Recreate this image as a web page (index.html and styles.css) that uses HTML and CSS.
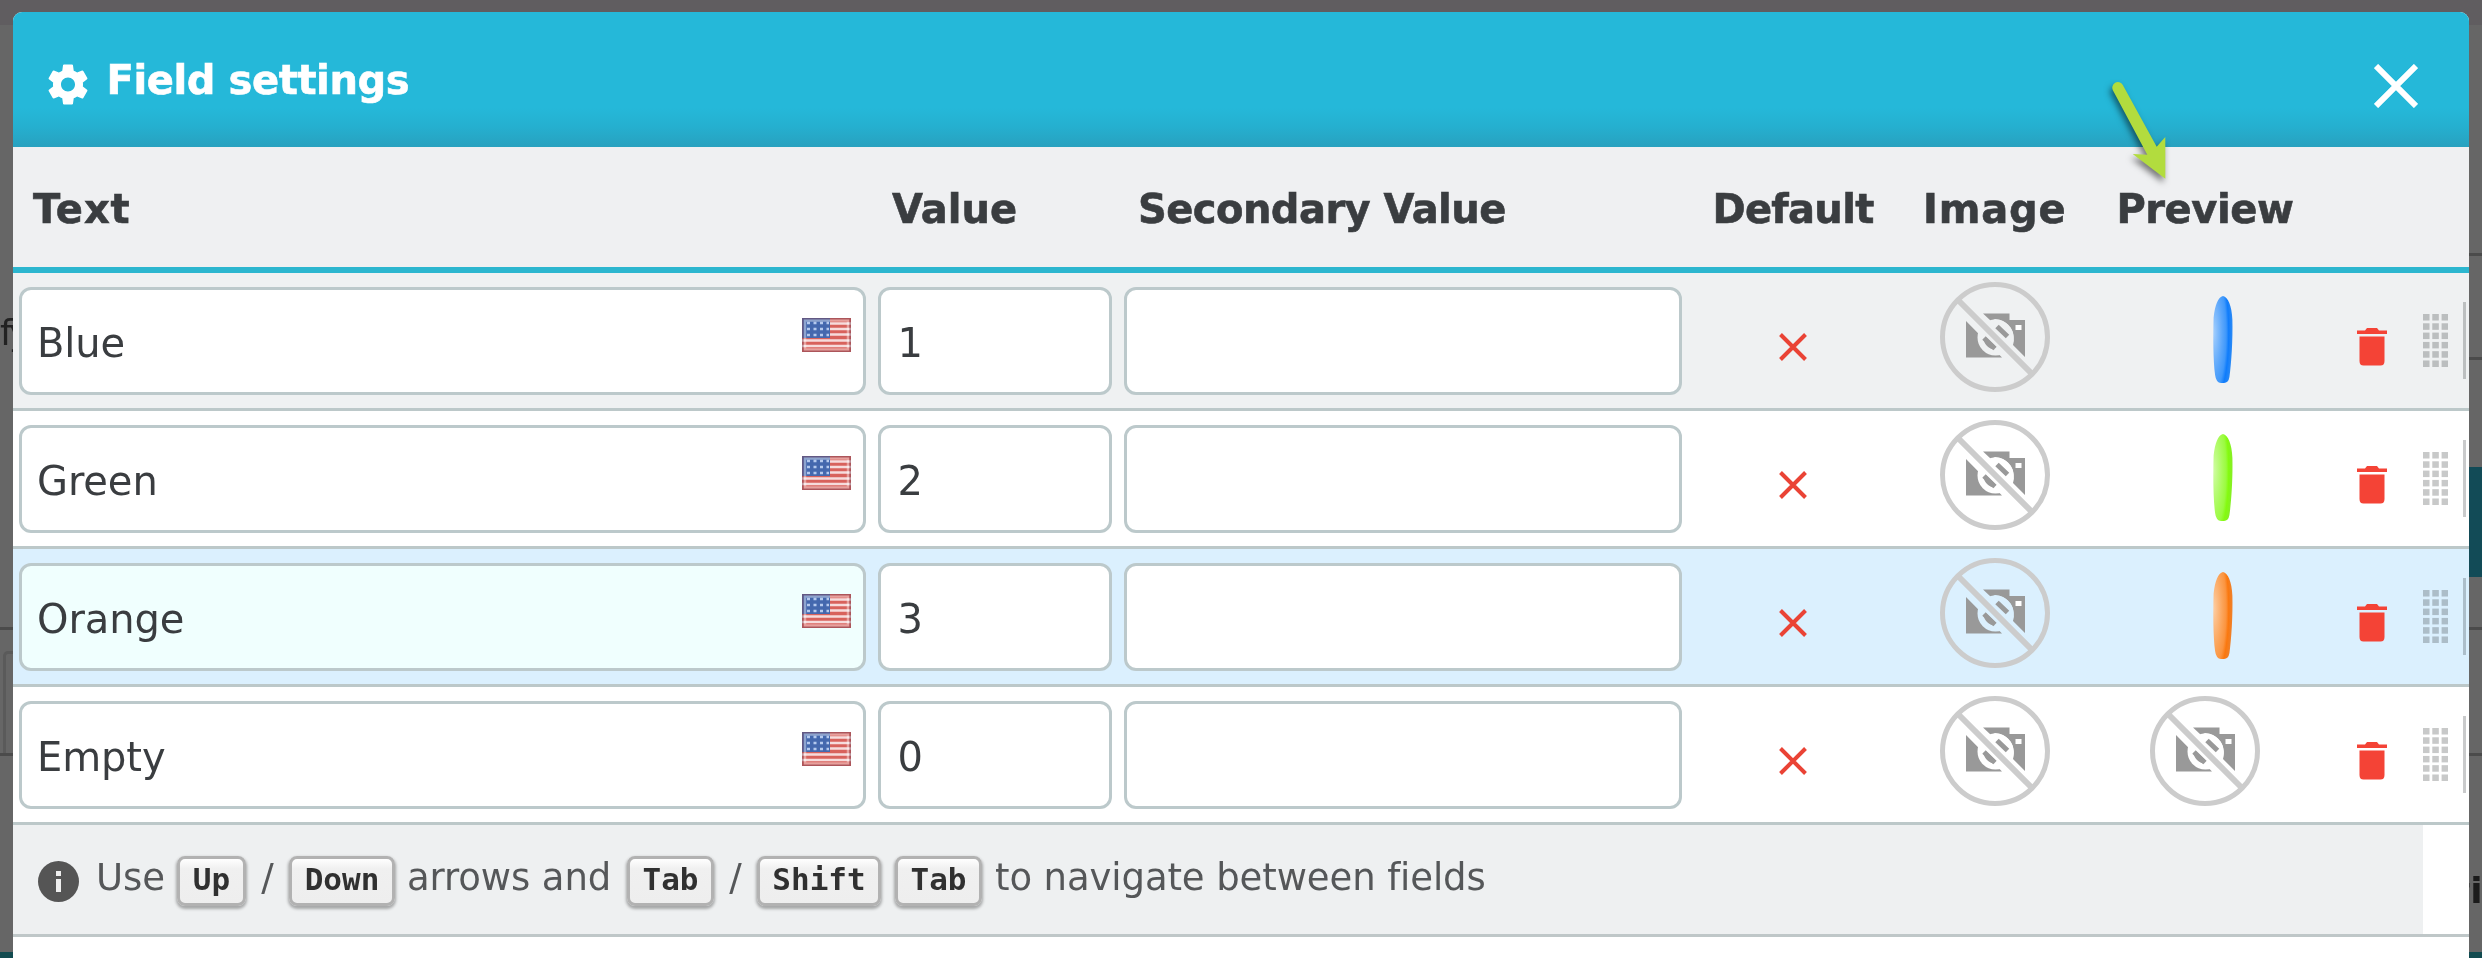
FILE: index.html
```
<!DOCTYPE html>
<html lang="en">
<head>
<meta charset="utf-8">
<title>Field settings</title>
<link rel="stylesheet" href="styles.css">
</head>
<body>
<svg width="0" height="0" class="defs" aria-hidden="true">
  <defs>
    <symbol id="noimg" viewBox="0 0 110 110">
      <path fill="#999" d="M26 39L62 75.500H26zM43 31.500H69.500V38H85V75L73 63A20 20 0 0 0 55 37L51 39z"/>
      <circle cx="55.500" cy="55.500" r="15" fill="none" stroke="currentColor" stroke-width="6"/>
      <path d="M57 44.500L67.500 54.500M44 56L55 66.500" stroke="#999" stroke-width="5"/>
      <rect x="75.500" y="43" width="6" height="5" fill="#fff"/>
      <path d="M29 29L84 84" stroke="currentColor" stroke-width="11"/>
      <path d="M18 18L92 92" stroke="#ccc" stroke-width="6"/>
      <circle cx="55" cy="55" r="52.500" fill="none" stroke="#ccc" stroke-width="5"/>
    </symbol>
    <symbol id="trash" viewBox="0 0 30 38"><path fill="#f44336" d="M0 2.500H8L10 0H20L22 2.500H30V6H0zM2.500 8.500H27.500V33Q27.500 37.500 23.500 37.500H6.500Q2.500 37.500 2.500 33z"/></symbol>
    <symbol id="cross" viewBox="0 0 28 28"><path d="M1.500 1.500L26.500 26.500M26.500 1.500L1.500 26.500" stroke="#ea4335" stroke-width="4"/></symbol>
    <symbol id="flag" viewBox="0 0 49 34">
      <path fill="#d8625c" d="M0 0H49V34H0z"/>
      <path d="M0 5.500H49M0 11H49M0 16.500H49M0 22.500H49M0 28H49" stroke="#f6dcdc" stroke-width="2.600"/>
      <path fill="#4468ae" d="M0 0H28V20H0z"/>
      <path d="M5 5H27M5 11H27M5 17H27" stroke="#b4c9ee" stroke-width="2.600" stroke-dasharray="3 3.500"/>
      <path d="M3 2.500H46V31.500H3z" fill="none" stroke="#fff" stroke-opacity=".4" stroke-width="2.500"/>
      <path d="M.8.8H48.200V33.200H.8z" fill="none" stroke="#804858" stroke-opacity=".5" stroke-width="1.600"/>
    </symbol>
    <symbol id="board" viewBox="0 0 20 88"><path d="M10 0C15 1 19 10 19.500 24C20 44 18.500 68 16.500 82Q15.500 88 11 88H8Q3 88 2 80C0 64 0 42 .5 22C2 9 5 1 10 0z"/></symbol>
    <radialGradient id="blue" cx=".02" cy=".42" r="1"><stop offset="0" stop-color="#a2cefd"/><stop offset=".45" stop-color="#5aa6fb"/><stop offset=".65" stop-color="#3f98fb"/><stop offset=".78" stop-color="#0f7cfb"/><stop offset="1" stop-color="#2f8cf4"/></radialGradient>
    <radialGradient id="green" cx=".02" cy=".42" r="1"><stop offset="0" stop-color="#cffca2"/><stop offset=".45" stop-color="#a9fb5a"/><stop offset=".65" stop-color="#9afb3f"/><stop offset=".78" stop-color="#84fa0f"/><stop offset="1" stop-color="#86ec2a"/></radialGradient>
    <radialGradient id="orange" cx=".02" cy=".42" r="1"><stop offset="0" stop-color="#fdcda2"/><stop offset=".45" stop-color="#fba45a"/><stop offset=".65" stop-color="#fb943f"/><stop offset=".78" stop-color="#fa780f"/><stop offset="1" stop-color="#ec8230"/></radialGradient>
  </defs>
</svg>

<div class="page">
  <div class="page-tab"></div>
  <div class="page-line l1"></div><div class="page-line l2"></div><div class="page-line l3"></div><div class="page-line l4"></div>
  <div class="page-line l3 west"></div><div class="page-line l4 west"></div>
  <div class="page-box"></div>
  <div class="page-block"></div><div class="page-foot"></div>
  <span class="page-text left">fy</span><span class="page-text right">ti</span>
</div>

<div class="modal">
  <header class="modal-head">
    <svg class="gear" viewBox="2 2 20 20"><path fill="#fff" d="M19.430 12.980c.04-.32.070-.64.070-.98s-.03-.66-.07-.98l2.110-1.650c.19-.15.240-.42.120-.64l-2-3.460c-.12-.22-.39-.3-.61-.22l-2.490 1c-.52-.4-1.080-.73-1.690-.98l-.38-2.650C14.460 2.180 14.250 2 14 2h-4c-.25 0-.46.180-.49.420l-.38 2.650c-.61.250-1.170.590-1.690.980l-2.490-1c-.23-.09-.49 0-.61.220l-2 3.460c-.13.220-.07.490.120.640l2.110 1.650c-.04.320-.07.650-.07.980s.03.660.070.980l-2.110 1.650c-.19.150-.24.420-.12.640l2 3.460c.12.220.390.300.610.220l2.490-1c.52.400 1.080.730 1.690.980l.38 2.650c.03.240.240.420.490.420h4c.25 0 .46-.18.490-.42l.38-2.650c.61-.25 1.170-.59 1.690-.98l2.490 1c.23.090.490 0 .610-.22l2-3.460c.12-.22.070-.49-.12-.64l-2.110-1.650zM12 15.500c-1.930 0-3.500-1.570-3.500-3.500s1.570-3.500 3.500-3.500 3.500 1.570 3.500 3.500-1.570 3.500-3.500 3.500z"/></svg>
    <h1 class="title">Field settings</h1>
    <svg class="close" viewBox="0 0 44 44"><path d="M2 2L42 42M42 2L2 42" stroke="#fff" stroke-width="6"/></svg>
  </header>

  <div class="row head">
    <div class="th t-text">Text</div><div class="th">Value</div><div class="th t-sec">Secondary Value</div>
    <div class="th mid t-def">Default</div><div class="th mid t-img">Image</div><div class="th mid t-prev">Preview</div>
  </div>

  <div class="row odd">
    <div class="cell"><div class="input"><span>Blue</span><svg class="flag"><use href="#flag"/></svg></div></div>
    <div class="cell"><div class="input num"><span>1</span></div></div>
    <div class="cell"><div class="input"></div></div>
    <div class="icon"><svg class="cross"><use href="#cross"/></svg></div>
    <div class="icon"><svg class="noimg"><use href="#noimg"/></svg></div>
    <div class="icon"><svg class="board" viewBox="0 0 20 88" fill="url(#blue)"><use href="#board"/></svg></div>
    <div class="icon"><svg class="trash"><use href="#trash"/></svg></div>
    <div class="drag"><i class="grip"></i><i class="bar"></i></div>
  </div>
  <div class="row">
    <div class="cell"><div class="input"><span>Green</span><svg class="flag"><use href="#flag"/></svg></div></div>
    <div class="cell"><div class="input num"><span>2</span></div></div>
    <div class="cell"><div class="input"></div></div>
    <div class="icon"><svg class="cross"><use href="#cross"/></svg></div>
    <div class="icon"><svg class="noimg"><use href="#noimg"/></svg></div>
    <div class="icon"><svg class="board" viewBox="0 0 20 88" fill="url(#green)"><use href="#board"/></svg></div>
    <div class="icon"><svg class="trash"><use href="#trash"/></svg></div>
    <div class="drag"><i class="grip"></i><i class="bar"></i></div>
  </div>
  <div class="row active">
    <div class="cell"><div class="input focus"><span>Orange</span><svg class="flag"><use href="#flag"/></svg></div></div>
    <div class="cell"><div class="input num"><span>3</span></div></div>
    <div class="cell"><div class="input"></div></div>
    <div class="icon"><svg class="cross"><use href="#cross"/></svg></div>
    <div class="icon"><svg class="noimg"><use href="#noimg"/></svg></div>
    <div class="icon"><svg class="board" viewBox="0 0 20 88" fill="url(#orange)"><use href="#board"/></svg></div>
    <div class="icon"><svg class="trash"><use href="#trash"/></svg></div>
    <div class="drag"><i class="grip"></i><i class="bar"></i></div>
  </div>
  <div class="row last">
    <div class="cell"><div class="input"><span>Empty</span><svg class="flag"><use href="#flag"/></svg></div></div>
    <div class="cell"><div class="input num"><span>0</span></div></div>
    <div class="cell"><div class="input"></div></div>
    <div class="icon"><svg class="cross"><use href="#cross"/></svg></div>
    <div class="icon"><svg class="noimg"><use href="#noimg"/></svg></div>
    <div class="icon"><svg class="noimg"><use href="#noimg"/></svg></div>
    <div class="icon"><svg class="trash"><use href="#trash"/></svg></div>
    <div class="drag"><i class="grip"></i><i class="bar"></i></div>
  </div>

  <div class="hint-wrap">
    <div class="hint">
      <svg class="info" viewBox="0 0 41 41"><circle cx="20.500" cy="20.500" r="20.500" fill="#555"/><path fill="#eee" d="M18 10h5v5h-5zM18 18h5v13h-5z"/></svg>
      <span class="w use">Use</span><kbd class="k-up">Up</kbd><span class="w slash">/</span><kbd class="k-down">Down</kbd><span class="w arrows">arrows and</span><kbd class="k-tab">Tab</kbd><span class="w slash">/</span><kbd class="k-shift">Shift</kbd><kbd class="k-tab second">Tab</kbd><span class="w rest">to navigate between fields</span>
    </div>
  </div>
</div>

<svg class="arrow" viewBox="0 0 70 115"><path fill="#b2dc3e" d="M8 10.500A5.500 5.500 0 0 1 17.800 5L51.700 66.700L60.300 57V98.700L27.700 74L42.300 74.700z"/></svg>
</body>
</html>
```
FILE: styles.css
```
* { box-sizing: border-box; }
body { margin: 0; width: 2482px; height: 958px; overflow: hidden; position: relative; background: #666; font-family: "DejaVu Sans", sans-serif; color: #3a3d40; }
.defs { position: absolute; }

/* dimmed page behind the dialog */
.page { position: absolute; inset: 0; overflow: hidden; border-top: 25px solid #605d60; }
.page-tab { position: absolute; left: 1196px; top: -25px; width: 220px; height: 25px; background: #666366; }
.page-line { position: absolute; right: 0; width: 13px; height: 3px; background: #4b4b4b; }
.page-line.west { right: auto; left: 0; }
.page-box { position: absolute; left: 3px; top: 626px; width: 20px; height: 102px; border: 3px solid #5a5a5a; border-bottom: 0; border-radius: 5px 0 0; }
.l1 { top: 228px; } .l2 { top: 332px; } .l3 { top: 602px; } .l4 { top: 728px; }
.page-block { position: absolute; right: 0; top: 442px; width: 13px; height: 110px; background: #124b57; }
.page-foot { position: absolute; left: 0; right: 0; bottom: 0; height: 6px; background: #124b50; }
.page-text { position: absolute; font-size: 36px; line-height: 42px; color: #222; }
.page-text.left { left: 0; top: 287px; letter-spacing: -3px; }
.page-text.right { left: 2453px; top: 845px; font-weight: bold; color: #1b1b1b; }

.modal { position: absolute; left: 13px; top: 12px; width: 2456px; height: 946px; background: #fff; border-radius: 9px 9px 0 0; overflow: hidden; display: flex; flex-direction: column; }
.modal-head { height: 135px; flex: none; display: flex; align-items: flex-start; padding: 52px 51px 0 35px; background: linear-gradient(#25b8d9 0, #25b8d9 96px, #25b0d0 114px, #28a1bf 135px); }
.gear { width: 40px; height: 41px; }
.title { margin: -8px auto 0 18.500px; font-size: 40px; line-height: 48px; color: #fff; letter-spacing: -.4px; -webkit-text-stroke: .6px #fff; }
.close { width: 44px; height: 44px; }

.row { display: grid; grid-template-columns: 859px 246px 569.500px 211px 192.500px 228px 104px 46px; height: 138px; flex: none; border-bottom: 3px solid #bcc8c9; }
.row.head { height: 126px; background: #eff0f2; border-bottom: 6px solid #2cb6cf; align-items: start; }
.th { padding: 38px 0 0 20px; font-weight: bold; font-size: 40px; line-height: 48px; white-space: nowrap; -webkit-text-stroke: .6px #3a3d40; }
.th.mid { padding-left: 0; text-align: center; }
.t-text { letter-spacing: .9px; }
.t-sec { letter-spacing: -.55px; }
.t-def { letter-spacing: -.7px; }
.t-img { letter-spacing: .8px; }
.t-prev { letter-spacing: -.4px; }
.row.odd { background: #eff1f2; }
.row.active { background: #dbf0fe; }
.cell { padding: 14px 6px 0; }
.input { height: 108px; border: 3px solid #bcc9cb; border-radius: 12px; background: #fff; display: flex; align-items: flex-start; justify-content: space-between; padding: 28px 12px 0 15px; font-size: 40px; line-height: 48px; letter-spacing: -.1px; }
.input span { margin-top: 1px; }
.input.num { padding-left: 16.500px; }
.input.focus { background: #f0fffe; }
.flag { width: 49px; height: 34px; }
.icon { display: flex; justify-content: center; align-items: flex-start; }
.cross { width: 28px; height: 28px; margin-top: 60px; }
.noimg { width: 110px; height: 110px; margin-top: 9px; color: #fff; }
.odd .noimg { color: #eff1f2; }
.active .noimg { color: #dbf0fe; }
.board { width: 20px; height: 87px; margin: 23px 0 0 35px; }
.trash { width: 30px; height: 38px; margin: 55px 0 0 1px; }
.drag { display: flex; align-items: flex-start; gap: 15px; mix-blend-mode: multiply; }
.grip { width: 25px; height: 53px; margin-top: 41px; background: conic-gradient(from 0deg at 6.500px 6.500px, transparent 75%, #c8c9c9 0) 0 0 / 9.300px 9.300px; }
.bar { width: 3px; height: 77px; margin-top: 29px; background: #c9cacb; }

.hint-wrap { height: 112px; flex: none; border-bottom: 3px solid #bfc7c8; }
.hint { width: 2410px; height: 109px; background: #eef0f1; display: flex; align-items: flex-start; padding: 31px 0 0 25px; color: #555759; font-size: 37px; line-height: 44px; letter-spacing: -.1px; white-space: nowrap; }
.info { width: 41px; height: 41px; margin-top: 5px; flex: none; }
.w { display: block; flex: none; }
.use { margin-left: 17px; width: 81px; }
.slash { width: 43px; text-align: center; }
.arrows { width: 232px; padding-left: 12px; }
.rest { padding-left: 13px; }
kbd { display: block; flex: none; height: 50px; border: 3px solid #b2b2b2; border-radius: 8px; background: linear-gradient(#fff 0, #f0f0f0 10px, #eee); box-shadow: 0 2px 3px 1px rgba(0,0,0,.3); color: #303030; font: bold 31px/41px "DejaVu Sans Mono", monospace; letter-spacing: 0; text-align: center; }
.k-up { width: 69px; } .k-down { width: 106px; } .k-tab { width: 87px; } .k-shift { width: 124px; } .second { margin-left: 14px; }

.arrow { position: absolute; left: 2105px; top: 80px; width: 70px; height: 115px; overflow: visible; filter: drop-shadow(-2px 4px 3px rgba(0,0,0,.5)); }
```
